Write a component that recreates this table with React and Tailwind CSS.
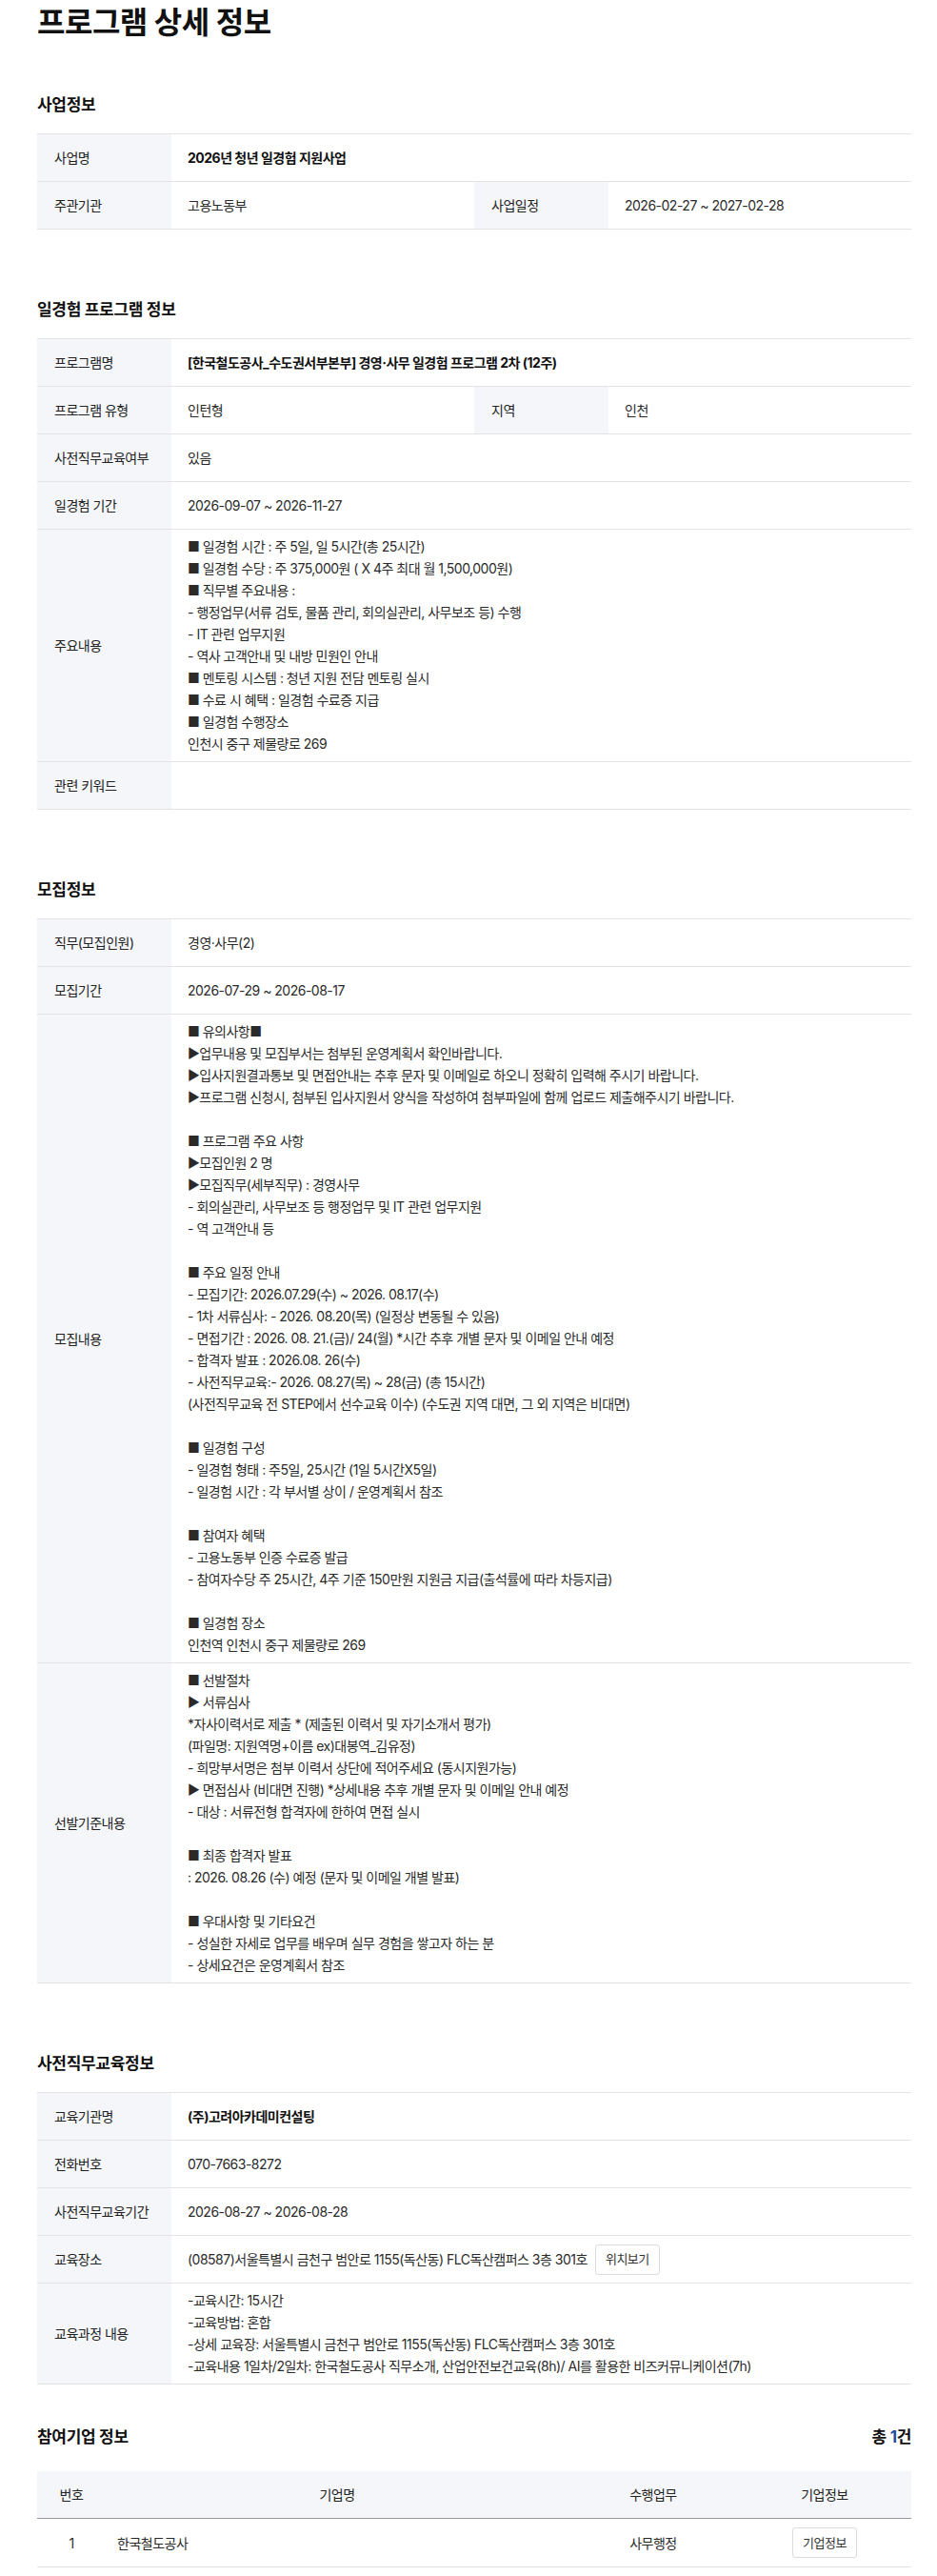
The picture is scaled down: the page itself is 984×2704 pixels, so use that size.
import React from 'react'

const font = "font-[Inter,'Noto_Sans_CJK_KR',sans-serif]"

const Label = ({ children }) => (
  <div className="flex items-center bg-[#f4f6f9] pl-[18px] pr-2 text-[#222]">{children}</div>
)

const Value = ({ children, bold }) => (
  <div className={`flex min-h-[49px] items-center py-[6px] pl-[17px] pr-4 text-[#2a2a2a] ${bold ? 'font-bold text-[#111]' : ''}`}>
    {children}
  </div>
)

const Lines = ({ lines }) => (
  <div className="pb-[7px] pl-[17px] pr-4 pt-[6px] text-[#2a2a2a]">
    {lines.map((l, i) => (
      <p key={i}>{l === '' ? '\u00a0' : l}</p>
    ))}
  </div>
)

const Row = ({ label, children }) => (
  <div className="grid grid-cols-[141px_1fr] border-b border-[#e3e3e3]">
    <Label>{label}</Label>
    {children}
  </div>
)

const Row2 = ({ l1, v1, l2, v2 }) => (
  <div className="grid grid-cols-[141px_1fr_141px_1fr] border-b border-[#e3e3e3]">
    <Label>{l1}</Label>
    <Value>{v1}</Value>
    <Label>{l2}</Label>
    <Value>{v2}</Value>
  </div>
)

const Section = ({ title, className, children }) => (
  <section className={className}>
    <h2 className="mb-[18px] text-[17px] font-bold leading-[24px] tracking-[-0.3px] text-[#111]">{title}</h2>
    <div className="border-t border-[#e3e3e3]">{children}</div>
  </section>
)

const T = '\u25B6\uFE0E'

const mainContent = [
  '■ 일경험 시간 : 주 5일, 일 5시간(총 25시간)',
  '■ 일경험 수당 : 주 375,000원 ( X 4주 최대 월 1,500,000원)',
  '■ 직무별 주요내용 :',
  '- 행정업무(서류 검토, 물품 관리, 회의실관리, 사무보조 등) 수행',
  '- IT 관련 업무지원',
  '- 역사 고객안내 및 내방 민원인 안내',
  '■ 멘토링 시스템 : 청년 지원 전담 멘토링 실시',
  '■ 수료 시 혜택 : 일경험 수료증 지급',
  '■ 일경험 수행장소',
  '인천시 중구 제물량로 269',
]

const recruitContent = [
  '■ 유의사항■',
  T + '업무내용 및 모집부서는 첨부된 운영계획서 확인바랍니다.',
  T + '입사지원결과통보 및 면접안내는 추후 문자 및 이메일로 하오니 정확히 입력해 주시기 바랍니다.',
  T + '프로그램 신청시, 첨부된 입사지원서 양식을 작성하여 첨부파일에 함께 업로드 제출해주시기 바랍니다.',
  '',
  '■ 프로그램 주요 사항',
  T + '모집인원 2 명',
  T + '모집직무(세부직무) : 경영사무',
  '- 회의실관리, 사무보조 등 행정업무 및 IT 관련 업무지원',
  '- 역 고객안내 등',
  '',
  '■ 주요 일정 안내',
  '- 모집기간: 2026.07.29(수) ~ 2026. 08.17(수)',
  '- 1차 서류심사: - 2026. 08.20(목) (일정상 변동될 수 있음)',
  '- 면접기간 : 2026. 08. 21.(금)/ 24(월) *시간 추후 개별 문자 및 이메일 안내 예정',
  '- 합격자 발표 : 2026.08. 26(수)',
  '- 사전직무교육:- 2026. 08.27(목) ~ 28(금) (총 15시간)',
  '(사전직무교육 전 STEP에서 선수교육 이수) (수도권 지역 대면, 그 외 지역은 비대면)',
  '',
  '■ 일경험 구성',
  '- 일경험 형태 : 주5일, 25시간 (1일 5시간X5일)',
  '- 일경험 시간 : 각 부서별 상이 / 운영계획서 참조',
  '',
  '■ 참여자 혜택',
  '- 고용노동부 인증 수료증 발급',
  '- 참여자수당 주 25시간, 4주 기준 150만원 지원금 지급(출석률에 따라 차등지급)',
  '',
  '■ 일경험 장소',
  '인천역 인천시 중구 제물량로 269',
]

const selectContent = [
  '■ 선발절차',
  T + ' 서류심사',
  '*자사이력서로 제출 * (제출된 이력서 및 자기소개서 평가)',
  '(파일명: 지원역명+이름 ex)대봉역_김유정)',
  '- 희망부서명은 첨부 이력서 상단에 적어주세요 (동시지원가능)',
  T + ' 면접심사 (비대면 진행) *상세내용 추후 개별 문자 및 이메일 안내 예정',
  '- 대상 : 서류전형 합격자에 한하여 면접 실시',
  '',
  '■ 최종 합격자 발표',
  ': 2026. 08.26 (수) 예정 (문자 및 이메일 개별 발표)',
  '',
  '■ 우대사항 및 기타요건',
  '- 성실한 자세로 업무를 배우며 실무 경험을 쌓고자 하는 분',
  '- 상세요건은 운영계획서 참조',
]

const eduContent = [
  '-교육시간: 15시간',
  '-교육방법: 혼합',
  '-상세 교육장: 서울특별시 금천구 범안로 1155(독산동) FLC독산캠퍼스 3층 301호',
  '-교육내용 1일차/2일차: 한국철도공사 직무소개, 산업안전보건교육(8h)/ AI를 활용한 비즈커뮤니케이션(7h)',
]

const SmallButton = ({ children, className }) => (
  <button className={`flex h-[32px] w-[68px] items-center justify-center rounded-[3px] border border-[#dcdcdc] bg-white text-[13px] text-[#333] ${className || ''}`}>
    {children}
  </button>
)

export default function App() {
  return (
    <div className={`${font} bg-white text-[14px] leading-[23px] tracking-[-0.5px]`}>
      <div className="ml-[39px] w-[918px]">
        <h1 className="text-[32px] font-bold leading-[48px] tracking-[-0.5px] text-[#111]">프로그램 상세 정보</h1>

        <Section title="사업정보" className="mt-[50px]">
          <Row label="사업명">
            <Value bold>2026년 청년 일경험 지원사업</Value>
          </Row>
          <Row2 l1="주관기관" v1="고용노동부" l2="사업일정" v2="2026-02-27 ~ 2027-02-28" />
        </Section>

        <Section title="일경험 프로그램 정보" className="mt-[72px]">
          <Row label="프로그램명">
            <Value bold>[한국철도공사_수도권서부본부] 경영·사무 일경험 프로그램 2차 (12주)</Value>
          </Row>
          <Row2 l1="프로그램 유형" v1="인턴형" l2="지역" v2="인천" />
          <Row label="사전직무교육여부">
            <Value>있음</Value>
          </Row>
          <Row label="일경험 기간">
            <Value>2026-09-07 ~ 2026-11-27</Value>
          </Row>
          <Row label="주요내용">
            <Lines lines={mainContent} />
          </Row>
          <Row label="관련 키워드">
            <Value />
          </Row>
        </Section>

        <Section title="모집정보" className="mt-[72px]">
          <Row label="직무(모집인원)">
            <Value>경영·사무(2)</Value>
          </Row>
          <Row label="모집기간">
            <Value>2026-07-29 ~ 2026-08-17</Value>
          </Row>
          <Row label="모집내용">
            <Lines lines={recruitContent} />
          </Row>
          <Row label="선발기준내용">
            <Lines lines={selectContent} />
          </Row>
        </Section>

        <Section title="사전직무교육정보" className="mt-[72px]">
          <Row label="교육기관명">
            <Value bold>(주)고려아카데미컨설팅</Value>
          </Row>
          <Row label="전화번호">
            <Value>070-7663-8272</Value>
          </Row>
          <Row label="사전직무교육기간">
            <Value>2026-08-27 ~ 2026-08-28</Value>
          </Row>
          <Row label="교육장소">
            <Value>
              (08587)서울특별시 금천구 범안로 1155(독산동) FLC독산캠퍼스 3층 301호
              <SmallButton className="ml-[8px]">위치보기</SmallButton>
            </Value>
          </Row>
          <Row label="교육과정 내용">
            <Lines lines={eduContent} />
          </Row>
        </Section>

        <section className="mt-[43px]">
          <div className="mb-[24px] flex items-center justify-between text-[17px] font-bold leading-[24px] tracking-[-0.3px] text-[#111]">
            <h2>참여기업 정보</h2>
            <p>
              총 <span className="text-[#1d4f9c]">1</span>건
            </p>
          </div>
          <div className="grid h-[50px] grid-cols-[72px_486px_178px_182px] items-center border-b border-[#9a9a9a] bg-[#f4f6f9] text-[#222]">
            <div className="text-center">번호</div>
            <div className="text-center">기업명</div>
            <div className="text-center">수행업무</div>
            <div className="text-center">기업정보</div>
          </div>
          <div className="grid h-[51px] grid-cols-[72px_486px_178px_182px] items-center border-b border-[#e3e3e3] text-[#2a2a2a]">
            <div className="text-center">1</div>
            <div className="pl-[12px]">한국철도공사</div>
            <div className="text-center">사무행정</div>
            <div className="flex justify-center">
              <SmallButton>기업정보</SmallButton>
            </div>
          </div>
        </section>
      </div>
    </div>
  )
}
